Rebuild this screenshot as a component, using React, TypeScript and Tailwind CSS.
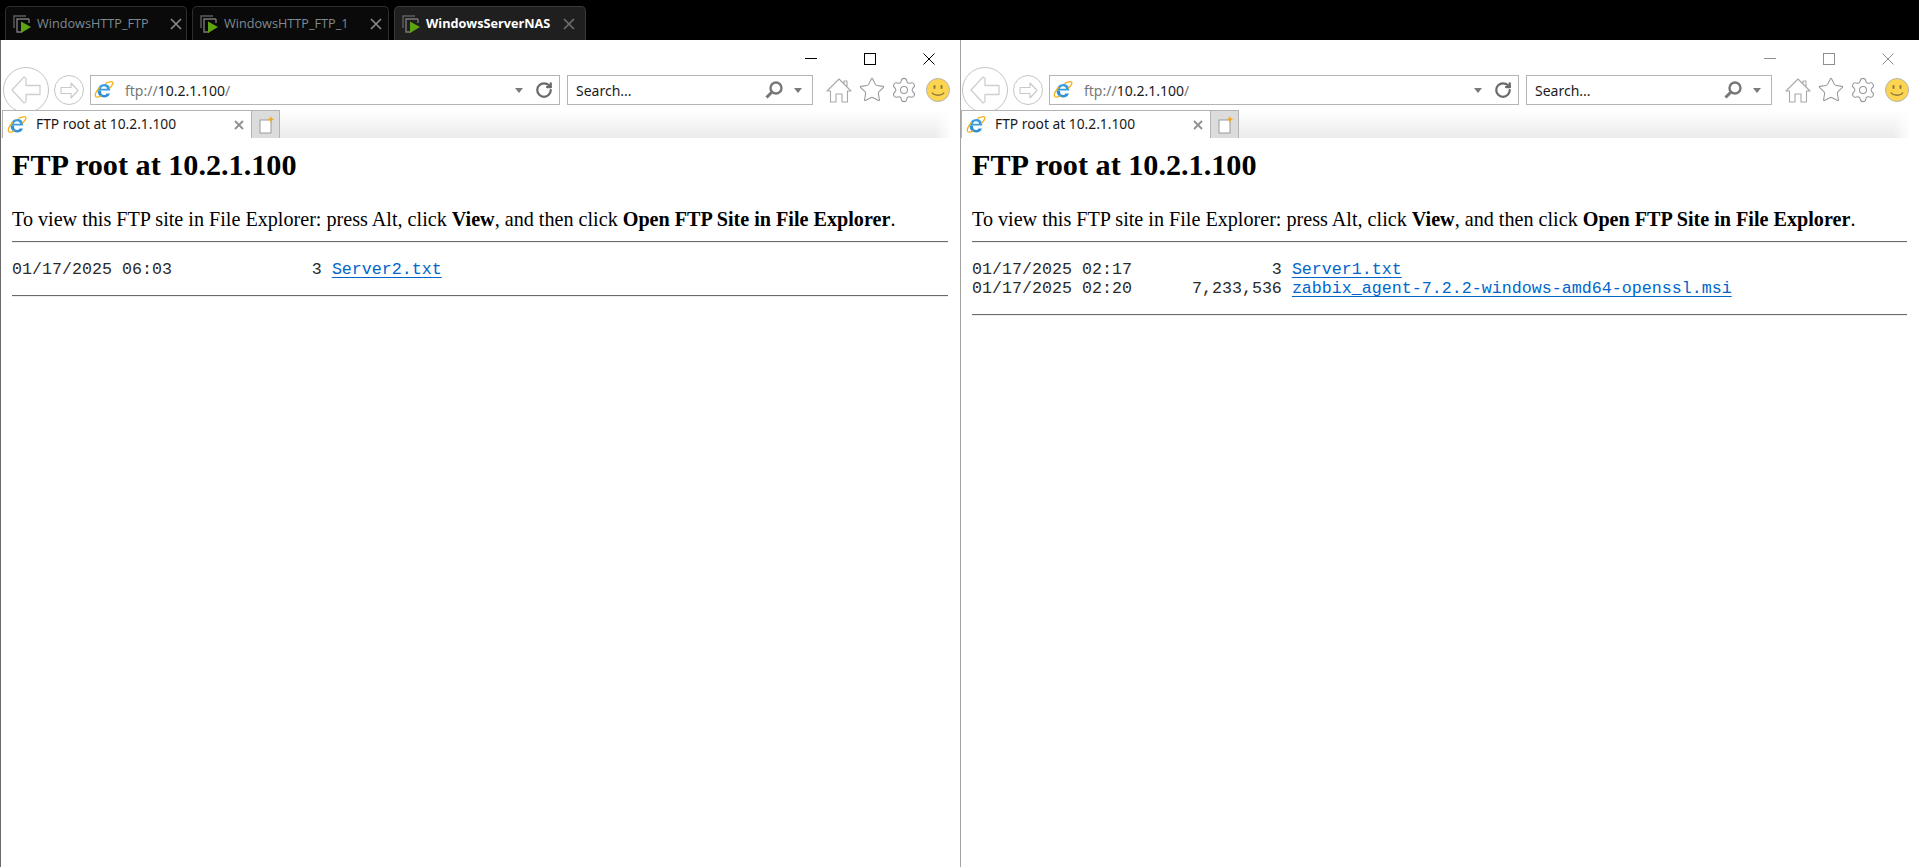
import React from 'react';
import { RotateCw, Settings, Star } from 'lucide-react';

// logo de IE dibujado a mano
const IeIcon = () => (
  <svg width="20" height="20" viewBox="0 0 20 20" fill="none" className="shrink-0">
    <path d="M3.6 10.6h12.6c.3-4-2.2-6.6-5.8-6.6-3.700 0-6.400 2.800-6.800 6.600zM7 8.700h6c-.1-1.500-1.300-2.500-3-2.500-1.600 0-2.800 1-3 2.500z" fill="#3b9ddd" fillRule="evenodd" />
    <path d="M3.600 10.600c-.2 4.100 2.700 6.900 6.500 6.900 2.900 0 5-1.400 5.900-3.900h-3.500c-.5 1-1.300 1.500-2.400 1.500-1.800 0-3-1.300-3-3.100v-1.400z" fill="#2f8fd6" />
    <path d="M12 3.200c3.400-1.600 6-2 6.700-1 .7 1.100-.6 3.300-3 5.800M5.500 7.500c-3 3.300-4.700 6.800-4 8.700.7 1.300 3.100 1.100 5.600-.2" stroke="#f2b01e" strokeWidth="1.300" strokeLinecap="round" />
  </svg>
);

const VmIcon = () => (
  <svg width="20" height="20" viewBox="0 0 20 20" fill="none" className="shrink-0">
    <path d="M14 2H2v12" stroke="#5e5e5e" strokeWidth="1.400" />
    <path d="M17 5H5v13h5M17 5v4" stroke="#7a7a7a" strokeWidth="1.400" />
    <path d="M9 7.500l10 5.500-10 6z" fill="#5ea312" />
  </svg>
);

const CloseX = ({ active }: { active?: boolean }) => (
  <svg width="12" height="12" viewBox="0 0 12 12" className="shrink-0">
    <path d="M1 1l10 10M11 1L1 11" stroke={active ? '#6f6f6f' : '#8a8a8a'} strokeWidth="1.600" />
  </svg>
);

const tabs = [
  { label: 'WindowsHTTP_FTP', w: 'w-[182px]', close: 'ml-[21px]' },
  { label: 'WindowsHTTP_FTP_1', w: 'w-[197px]', close: 'ml-[22px]' },
];

const ArrowLeft = () => (
  <svg width="32" height="30" viewBox="0 0 32 30" fill="none">
    <path d="M14 2L2 15l12 13 2-1.500v-7h14v-9H16v-7z" stroke="#cfcfcf" strokeWidth="1.300" strokeLinejoin="round" />
  </svg>
);

const ArrowRight = () => (
  <svg width="19" height="17" viewBox="0 0 19 17" fill="none">
    <path d="M11 1l7 7.500-7 7.500v-4.500H1v-6h10z" stroke="#c9c9c9" strokeWidth="1.100" strokeLinejoin="round" />
  </svg>
);

const Caret = () => (
  <svg width="8" height="5" viewBox="0 0 8 5"><path d="M0 0h8L4 5z" fill="#7a7a7a" /></svg>
);

interface BrowserProps {
  active: boolean;
  width: string;
  borderColor: string;
  rows: { date: string; size: string; name: string }[];
}

const Browser: React.FC<BrowserProps> = ({ active, width, borderColor, rows }) => {
  const ctrl = active ? '#000000' : '#8f8f8f';
  return (
    <div className={`${width} h-full bg-white border-l ${borderColor} flex flex-col overflow-hidden`}>
      {/* Controles de ventana */}
      <div className="h-[35px] shrink-0 flex justify-end items-start pt-[13px] pr-[25px] gap-[47px]">
        <svg width="12" height="12" viewBox="0 0 12 12"><path d="M0 5.500h12" stroke={ctrl} /></svg>
        <svg width="12" height="12" viewBox="0 0 12 12" fill="none"><rect x=".5" y=".5" width="11" height="11" stroke={ctrl} /></svg>
        <svg width="12" height="12" viewBox="0 0 12 12"><path d="M.5.500l11 11M11.500.500l-11 11" stroke={ctrl} /></svg>
      </div>

      {/* Barra de navegacion */}
      <div className={`h-[30px] shrink-0 flex items-center font-['Noto_Sans',sans-serif] text-[14px] ${active ? 'pl-[2px]' : 'pl-[1px]'}`}>
        <div className="-my-2 w-[46px] h-[46px] shrink-0 rounded-full border border-[#c4c4c4] bg-white flex items-center justify-center">
          <ArrowLeft />
        </div>
        <div className="ml-[5px] w-[30px] h-[30px] shrink-0 rounded-full border border-[#c4c4c4] flex items-center justify-center">
          <ArrowRight />
        </div>
        <div className="ml-[6px] w-[470px] h-[30px] shrink-0 border border-[#b4b4b4] flex items-center pl-[3px]">
          <IeIcon />
          <span className="ml-[11px] text-[#777]">ftp://<span className="text-[#1a1a1a]">10.2.1.100</span>/</span>
          <span className="ml-auto"><Caret /></span>
          <RotateCw size={18} strokeWidth={3} color="#6a6a6a" className="ml-[12px] mr-[6px]" />
        </div>
        <div className="ml-[7px] w-[246px] h-[30px] shrink-0 border border-[#b4b4b4] flex items-center pl-[8px] text-[#1a1a1a]">
          <span>Search...</span>
          <svg width="20" height="20" viewBox="0 0 20 20" fill="none" className="ml-auto">
            <circle cx="12" cy="8" r="5.500" stroke="#777" strokeWidth="2.400" />
            <path d="M8 12l-5.500 5.500" stroke="#777" strokeWidth="3" />
          </svg>
          <span className="ml-[10px] mr-[10px]"><Caret /></span>
        </div>
        <svg width="26" height="25" viewBox="0 0 26 25" fill="none" className="ml-[13px] shrink-0">
          <path d="M1 13L13 1l12 12h-3.500v11H16v-8h-6v8H4.500V13zM18 6V3h3v6.500" stroke="#a8a8a8" strokeWidth="1.100" strokeLinejoin="round" />
        </svg>
        <Star size={28} strokeWidth={0.900} color="#999" className="ml-[6px] shrink-0" />
        <Settings size={28} strokeWidth={0.900} color="#999" className="ml-[4px] shrink-0" />
        <svg width="24" height="24" viewBox="0 0 24 24" className="ml-[8px] shrink-0">
          <circle cx="12" cy="12" r="11.500" fill="#fdd44f" stroke="#b5b5b5" />
          <rect x="7.500" y="7" width="2" height="4" rx="1" fill="#8a7a3a" />
          <rect x="14.500" y="7" width="2" height="4" rx="1" fill="#8a7a3a" />
          <path d="M6 14.500c2 3.500 10 3.500 12 0" stroke="#8a7a3a" strokeWidth="1.500" fill="none" />
        </svg>
      </div>

      {/* Pestanas */}
      <div className="relative mt-[5px] h-[28px] shrink-0 flex bg-gradient-to-b from-white to-[#ebebeb] mr-[8px] font-['Noto_Sans',sans-serif]">
        <div className={`${active ? 'ml-[1px]' : 'ml-0'} w-[250px] h-full bg-white border-t border-x border-[#b4b4b4] border-b-0 flex items-center pl-[4px]`}>
          <IeIcon />
          <span className="ml-[9px] text-[13.800px] text-[#1a1a1a]">FTP root at 10.2.1.100</span>
          <span className="ml-auto mr-[7px]">
            <svg width="10" height="10" viewBox="0 0 10 10"><path d="M1 1l8 8M9 1L1 9" stroke="#909090" strokeWidth="1.800" /></svg>
          </span>
        </div>
        <div className="w-[28px] h-full bg-[#dcdcdc] border-t border-r border-[#b4b4b4] flex items-center justify-center">
          <svg width="18" height="18" viewBox="0 0 18 18">
            <rect x="3" y="4" width="11" height="13" fill="#fff" stroke="#9a9a9a" />
            <path d="M14 0l1 2.500L17.500 3 15 4.200 14 7l-1-2.800L10.500 3 13 2.500z" fill="#f2a81e" />
          </svg>
        </div>
        <div className="absolute right-0 top-0 bottom-0 w-[18px] bg-gradient-to-r from-transparent to-white" />
      </div>

      {/* Contenido de la pagina */}
      <div className="pl-[11px] pr-[12px] text-black font-['Liberation_Serif',serif]">
        <h1 className="mt-[10px] text-[30.200px] leading-[34px] font-bold">FTP root at 10.2.1.100</h1>
        <p className="mt-[26px] text-[20.150px] leading-[22px]">
          To view this FTP site in File Explorer: press Alt, click <b>View</b>, and then click <b>Open FTP Site in File Explorer</b>.
        </p>
        <div className="mt-[11px] h-[2px] border-t border-[#6a6a6a] bg-[#eeeeee]" />
        <pre className="mt-[17px] font-['Liberation_Mono',monospace] text-[16.670px] leading-[19px] text-[#2a2a2a]">
          {rows.map((r) => (
            <div key={r.name}>
              {r.date}{r.size.padStart(15)} <a className="text-[#0066cc] underline underline-offset-[3px]">{r.name}</a>
            </div>
          ))}
        </pre>
        <div className="mt-[16px] h-[2px] border-t border-[#6a6a6a] bg-[#eeeeee]" />
      </div>
    </div>
  );
};

export default function App() {
  return (
    <div className="w-[1919px] h-[867px] flex flex-col overflow-hidden bg-black">
      {/* Pestanas de VM */}
      <div className="h-[40px] shrink-0 bg-black flex items-end pl-[5px] gap-[5px] font-['Open_Sans',sans-serif] text-[12.700px]">
        {tabs.map((t) => (
          <div key={t.label} className={`${t.w} h-[34px] shrink-0 rounded-t-[5px] border-t border-x border-[#2e2e2e] bg-[#0a0a0a] flex items-center pl-[6px]`}>
            <VmIcon />
            <span className="ml-[5px] text-[#7e8a92] whitespace-nowrap">{t.label}</span>
            <span className={t.close}><CloseX /></span>
          </div>
        ))}
        <div className="w-[192px] h-[34px] shrink-0 rounded-t-[5px] border-t border-x border-[#3a3a3a] bg-[#1f1f1f] flex items-center pl-[6px]">
          <VmIcon />
          <span className="ml-[5px] text-white font-bold whitespace-nowrap">WindowsServerNAS</span>
          <span className="ml-[13px]"><CloseX active /></span>
        </div>
      </div>

      {/* Ventanas del navegador */}
      <div className="flex-1 flex">
        <Browser
          active
          width="w-[960px]"
          borderColor="border-[#6a6a6a]"
          rows={[{ date: '01/17/2025 06:03', size: '3', name: 'Server2.txt' }]}
        />
        <Browser
          active={false}
          width="w-[959px]"
          borderColor="border-[#a3a3a3]"
          rows={[
            { date: '01/17/2025 02:17', size: '3', name: 'Server1.txt' },
            { date: '01/17/2025 02:20', size: '7,233,536', name: 'zabbix_agent-7.2.2-windows-amd64-openssl.msi' },
          ]}
        />
      </div>
    </div>
  );
}
